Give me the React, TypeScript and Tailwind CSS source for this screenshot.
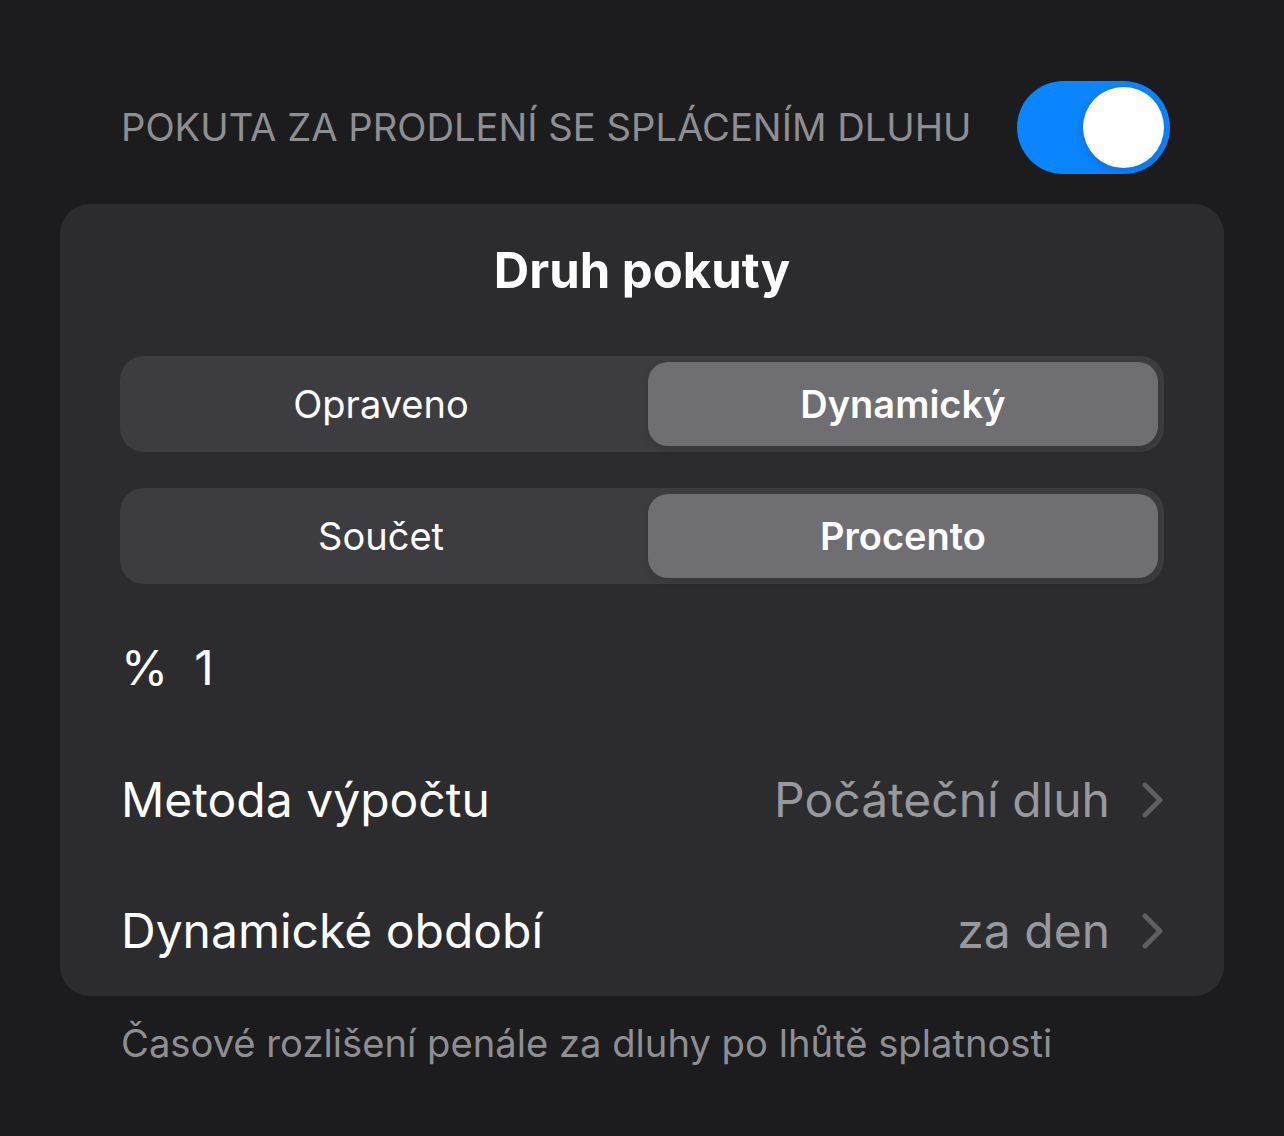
import { useState } from "react";

const Chevron = () => (
  <svg width="22" height="36" viewBox="0 0 22 36" fill="none" className="shrink-0">
    <path d="M3 3 L18 18 L3 33" stroke="#5f5f63" strokeWidth="5" strokeLinecap="round" strokeLinejoin="round" />
  </svg>
);

const Segmented = ({ options, value, onChange }: { options: string[]; value: number; onChange: (i: number) => void }) => (
  <div className="grid h-[96px] grid-cols-2 gap-[12px] rounded-[24px] bg-[#3d3d41] p-[6px]">
    {options.map((opt, i) => (
      <button
        key={opt}
        onClick={() => onChange(i)}
        className={`rounded-[20px] text-[38px] leading-none text-white ${
          i === value ? "bg-[#6e6e73] font-semibold shadow-[0_3px_8px_rgba(0,0,0,0.12)]" : "font-normal"
        }`}
      >
        {opt}
      </button>
    ))}
  </div>
);

export default function App() {
  const [enabled, setEnabled] = useState(true);
  const [kind, setKind] = useState(1);
  const [unit, setUnit] = useState(1);

  return (
    <div className="min-h-[1136px] bg-[#1c1c1e] px-[60px] pt-[81px] font-['Inter','Noto_Sans',sans-serif] antialiased">
      {/* section header */}
      <div className="flex items-center justify-between pl-[61px] pr-[54px]">
        <span className="text-[38.2px] leading-none text-[#8e8e93]">
          POKUTA ZA PRODLENÍ SE SPLÁCENÍM DLUHU
        </span>
        <button
          onClick={() => setEnabled(!enabled)}
          className={`flex h-[93px] w-[153px] items-center rounded-full p-[6px] ${
            enabled ? "justify-end bg-[#0a84ff]" : "justify-start bg-[#39393d]"
          }`}
        >
          <span className="h-[81px] w-[81px] rounded-full bg-white shadow-[0_3px_8px_rgba(0,0,0,0.15)]" />
        </button>
      </div>

      {/* card */}
      <div className="mt-[30px] rounded-[30px] bg-[#2c2c2e] px-[60px]">
        <h2 className="pt-[37px] pb-[55px] text-center text-[49px] font-bold leading-[60px] text-white">
          Druh pokuty
        </h2>

        <div className="flex flex-col gap-[36px]">
          <Segmented options={["Opraveno", "Dynamický"]} value={kind} onChange={setKind} />
          <Segmented options={["Součet", "Procento"]} value={unit} onChange={setUnit} />
        </div>

        <div className="mt-[18px] flex h-[132px] items-center gap-[26px] pl-[1px] text-[48px] text-white">
          <span>%</span>
          <span>1</span>
        </div>

        <div className="flex h-[132px] items-center justify-between pl-[1px]">
          <span className="text-[48px] text-white">Metoda výpočtu</span>
          <div className="flex items-center gap-[32px]">
            <span className="text-[48px] text-[#98989f]">Počáteční dluh</span>
            <Chevron />
          </div>
        </div>

        <div className="flex h-[130px] items-center justify-between pl-[1px]">
          <span className="text-[48px] text-white">Dynamické období</span>
          <div className="flex items-center gap-[32px]">
            <span className="text-[48px] text-[#98989f]">za den</span>
            <Chevron />
          </div>
        </div>
      </div>

      <p className="pt-[23px] pl-[61px] text-[38.2px] leading-[48px] text-[#8e8e93]">
        Časové rozlišení penále za dluhy po lhůtě splatnosti
      </p>
    </div>
  );
}
